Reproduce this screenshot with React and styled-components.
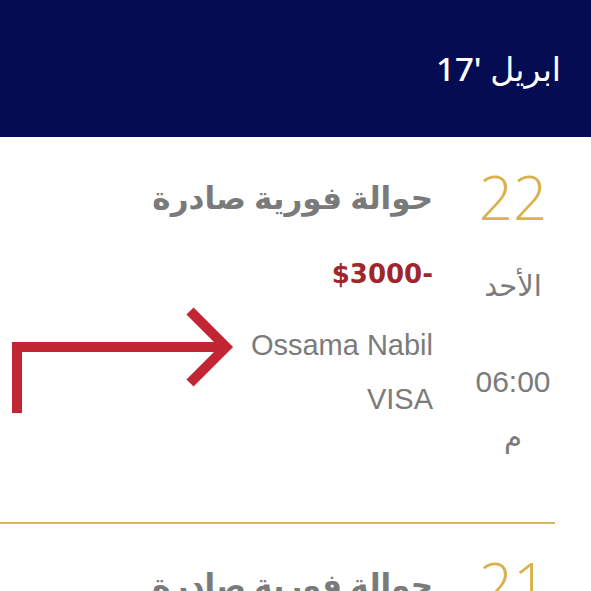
import React from "react";
import styled, { createGlobalStyle } from "styled-components";

const GlobalStyle = createGlobalStyle`
  body {
    margin: 0;
    background: #ffffff;
    font-family: "Noto Sans", "DejaVu Sans", sans-serif;
  }
`;

const Page = styled.div`
  position: relative;
  direction: rtl;
  overflow: hidden;
  height: 591px;
`;

const Header = styled.div`
  height: 137px;
  background-color: #060c52;
  display: flex;
  align-items: center;
  padding-right: 30px;
  box-sizing: border-box;
`;

const MonthTitle = styled.div`
  color: #ffffff;
  font-size: 33px;
  font-weight: 500;
  font-family: "Noto Sans", "DejaVu Sans", sans-serif;
`;

const Item = styled.div`
  display: flex;
  flex-direction: row;
  align-items: flex-start;
  padding-top: 30px;
  padding-bottom: 66px;
  margin-right: 36px;
  border-bottom: 2px solid #d8b75e;
`;

const DateCol = styled.div`
  width: 84px;
  display: flex;
  flex-direction: column;
  align-items: center;
  color: #7b7b7b;
`;

const DayNumber = styled.div`
  font-family: "Open Sans", sans-serif;
  font-weight: 300;
  font-size: 60px;
  line-height: 60px;
  color: #d9b24e;
`;

const DateText = styled.div`
  font-family: ${(p) => (p.latin ? '"Liberation Sans", Arial, sans-serif' : '"Noto Sans", "DejaVu Sans", sans-serif')};
  font-size: ${(p) => (p.latin ? "30px" : "29px")};
  line-height: 40px;
  margin-top: ${(p) => p.gap || 0}px;
`;

const Details = styled.div`
  margin-right: 38px;
  padding-top: 8px;
  display: flex;
  flex-direction: column;
  align-items: flex-start;
  text-align: right;
`;

const Title = styled.div`
  font-size: 31px;
  font-weight: 700;
  line-height: 44px;
  color: #7a7a7a;
`;

const Amount = styled.div`
  font-family: "DejaVu Sans", sans-serif;
  font-weight: 700;
  font-size: 26px;
  line-height: 40px;
  color: #a0262b;
  margin-top: 35px;
`;

const Meta = styled.div`
  direction: ltr;
  font-family: "Liberation Sans", Arial, sans-serif;
  font-size: 29px;
  line-height: 40px;
  color: #7b7b7b;
  margin-top: ${(p) => p.gap}px;
`;

const Pointer = styled.svg`
  position: absolute;
  left: 0;
  top: 300px;
`;

const items = [
  { day: "22", weekday: "الأحد", time: "06:00", period: "م", title: "حوالة فورية صادرة", amount: "-$3000", name: "Ossama Nabil", card: "VISA" },
  { day: "21", weekday: "السبت", time: "04:30", period: "م", title: "حوالة فورية صادرة", amount: "-$1200", name: "Ossama Nabil", card: "VISA" },
];

function App() {
  return (
    <Page>
      <GlobalStyle />
      <Header>
        <MonthTitle>ابريل '17</MonthTitle>
      </Header>
      {items.map((item, i) => (
        <Item key={i}>
          <DateCol>
            <DayNumber>{item.day}</DayNumber>
            <DateText gap={38}>{item.weekday}</DateText>
            <DateText latin gap={57}>{item.time}</DateText>
            <DateText gap={14}>{item.period}</DateText>
          </DateCol>
          <Details>
            <Title>{item.title}</Title>
            <Amount>{item.amount}</Amount>
            <Meta gap={31}>{item.name}</Meta>
            <Meta gap={14}>{item.card}</Meta>
          </Details>
        </Item>
      ))}
      <Pointer width="250" height="120" viewBox="0 0 250 120">
        <polyline points="17,113 17,47 224,47" fill="none" stroke="#c22534" strokeWidth="10" strokeLinejoin="miter" />
        <polyline points="190,11 226,47 190,83" fill="none" stroke="#c22534" strokeWidth="10" strokeLinejoin="miter" />
      </Pointer>
    </Page>
  );
}

export default App;
